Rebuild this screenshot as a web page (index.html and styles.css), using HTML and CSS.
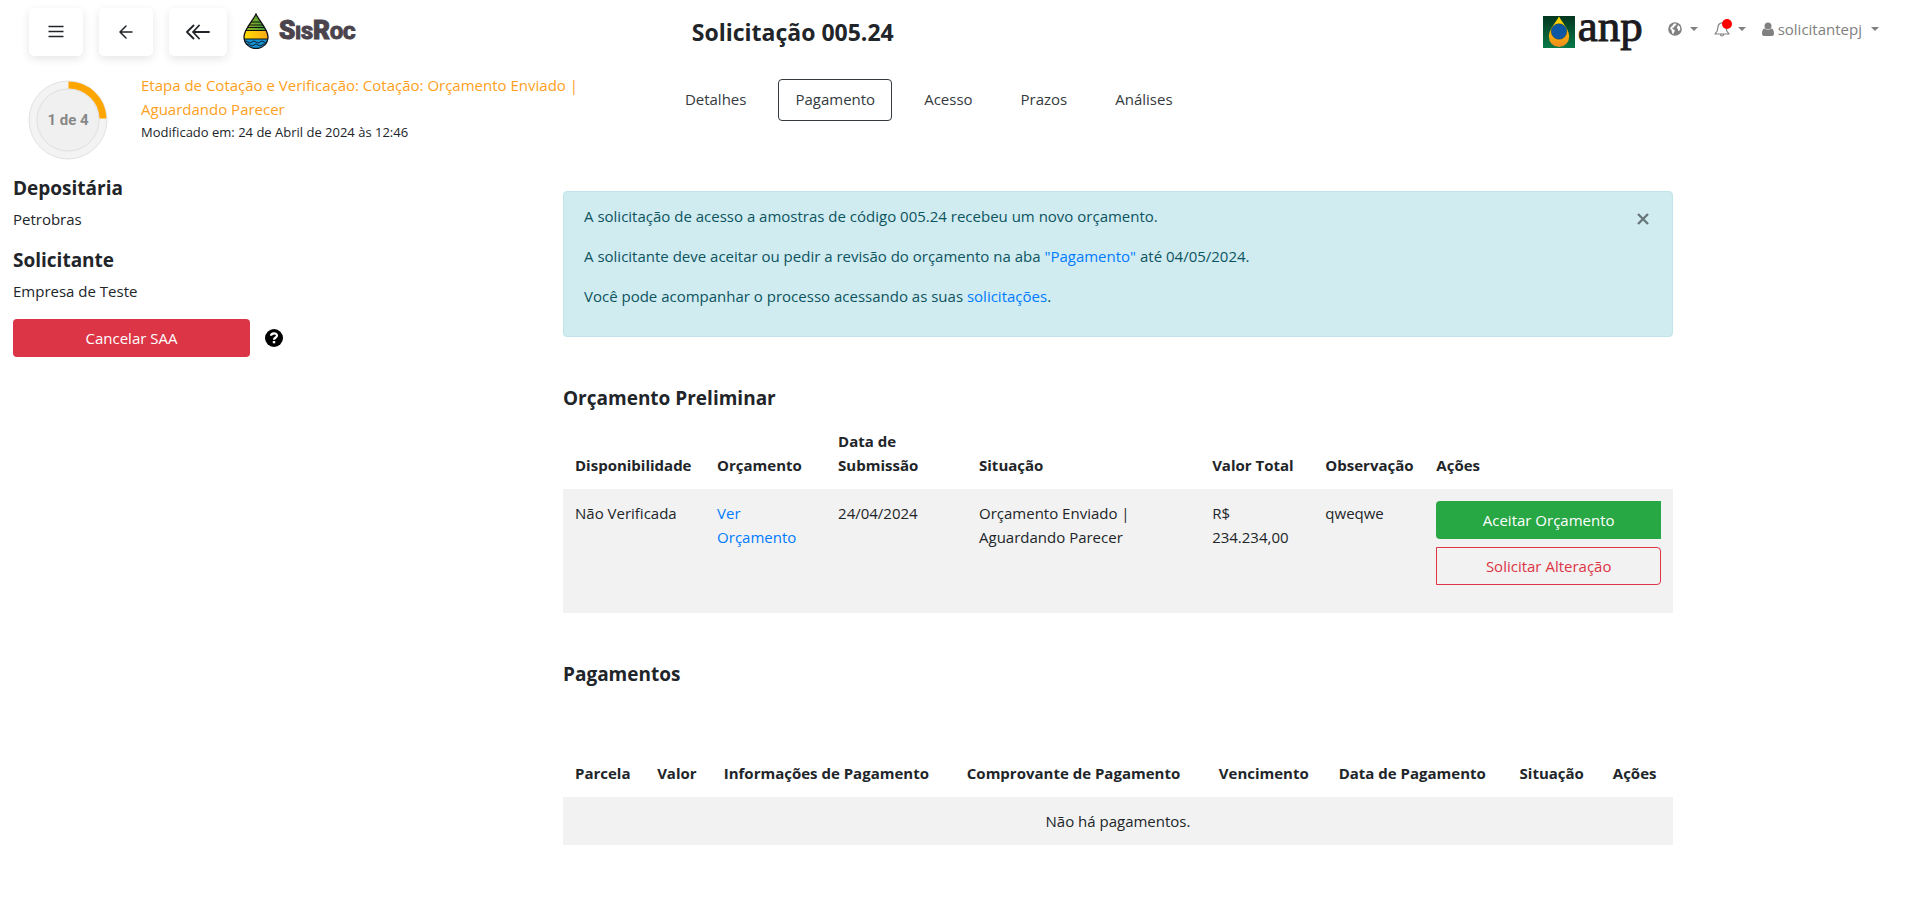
FILE: index.html
```html
<!DOCTYPE html>
<html lang="pt-BR">
<head>
<meta charset="utf-8">
<title>SisRoc - Solicitação 005.24</title>
<link rel="stylesheet" href="styles.css">
</head>
<body>
<header class="topbar">
  <div class="topbar-left">
    <button class="nav-btn" type="button" aria-label="Menu">
      <svg width="16" height="16" viewBox="0 0 16 16" fill="none" stroke="#212529" stroke-width="1.3"><path d="M0.500 2.500h15M0.500 7.500h15M0.500 12.500h15"/></svg>
    </button>
    <button class="nav-btn" type="button" aria-label="Voltar">
      <svg width="14" height="14" viewBox="0 0 14 14" fill="none" stroke="#212529" stroke-width="1.5" stroke-linecap="round" stroke-linejoin="round"><path d="M13 7H1M7 1L1 7l6 6"/></svg>
    </button>
    <button class="nav-btn nav-btn-wide" type="button" aria-label="Voltar ao início">
      <svg width="24" height="16" viewBox="0 0 24 16" fill="none" stroke="#212529" stroke-width="1.8" stroke-linecap="round" stroke-linejoin="round"><path d="M23 8H7M13 1.500L7 8l6 6.500M7.500 1.500L1 8l6.500 6.500"/></svg>
    </button>
    <a class="brand" href="#" aria-label="SisRoc">
      <svg width="26" height="36" viewBox="0 0 26 36">
        <defs><clipPath id="drop"><path d="M13 1C10 8 1 16 1 24a12 11.500 0 0 0 24 0C25 16 16 8 13 1z"/></clipPath>
        <linearGradient id="leaf"><stop offset="0" stop-color="#a5bf1f"/><stop offset="1" stop-color="#2f9440"/></linearGradient>
        <linearGradient id="sand"><stop offset="0" stop-color="#ffe000"/><stop offset="1" stop-color="#f9a51a"/></linearGradient></defs>
        <g clip-path="url(#drop)">
          <path fill="url(#leaf)" d="M0 0h26v17H0z"/>
          <path fill="url(#sand)" d="M0 17h26v9H0z"/>
          <path fill="#1593d2" d="M0 26h26v10H0z"/>
          <path d="M0 9h26M0 12h26M0 14.500h26M0 17.500h26M0 26h26" stroke="#111" stroke-width="1.200"/>
          <path d="M1 29q2-2 4 0t4 0 4 0 4 0 4 0 4 0M3 32q2-2 4 0t4 0 4 0 4 0 4 0" fill="none" stroke="#123" stroke-width="1"/>
        </g>
        <path d="M13 1C10 8 1 16 1 24a12 11.500 0 0 0 24 0C25 16 16 8 13 1z" fill="none" stroke="#111" stroke-width="1.300"/>
      </svg>
      <span class="brand-name">S<small>IS</small>R<small>OC</small></span>
    </a>
  </div>
  <h1 class="page-title">Solicitação 005.24</h1>
  <div class="topbar-right">
    <a class="anp" href="#" aria-label="ANP">
      <svg width="32" height="32" viewBox="0 0 32 32">
        <defs><linearGradient id="green" x2="0" y2="1"><stop offset="0" stop-color="#03351f"/><stop offset="1" stop-color="#087a48"/></linearGradient>
        <linearGradient id="gold" x2="0" y2="1"><stop offset="0" stop-color="#ffe000"/><stop offset="1" stop-color="#f08a1c"/></linearGradient></defs>
        <path fill="url(#green)" d="M0 0h32v32H0z"/>
        <path fill="url(#gold)" d="M16 0.500C14 5 5.800 13 5.800 20.500a10.200 10.500 0 0 0 20.400 0C26.200 13 18 5 16 0.500z"/>
        <circle cx="16" cy="15.500" r="7.800" fill="#0b57a4" stroke="#073d2a" stroke-width=".4"/>
      </svg>
      <span class="anp-name">anp</span>
    </a>
    <button class="menu-btn" type="button" aria-label="Idioma">
      <svg width="14" height="14" viewBox="0 0 14 14"><circle cx="7" cy="7" r="6.800" fill="#808080"/><path fill="#fff" d="M6 1.500l2.500.3L8 3.200 6.500 4 6 5.500 4 6l1.500 1.500 1.500 1-.8 1.500L5 12.500 4 10.500 3.500 8 2 6.500 3 5 4.500 3.500zM10.500 3l1.500 2 .3 2.500-1.300 1.500-1-.5V7L8.800 6.200l.5-1.700z"/></svg>
      <span class="caret"></span>
    </button>
    <button class="menu-btn" type="button" aria-label="Notificações">
      <svg width="16" height="16" viewBox="0 0 16 16" fill="none" stroke="#808080" stroke-width="1.200" stroke-linejoin="round"><path d="M8 1v1M8 2C5.500 2 4 4 4 6c0 3.500-1 5-3 7h14c-2-2-3-3.500-3-7 0-2-1.500-4-4-4zM6.500 13.500a1.500 1.500 0 0 0 3 0"/></svg>
      <span class="alert-dot"></span>
      <span class="caret"></span>
    </button>
    <button class="menu-btn menu-user" type="button">
      <svg width="12" height="14" viewBox="0 0 12 14" fill="#808080"><circle cx="6" cy="4" r="3.500"/><path d="M2.500 6.500C1 7 0 8.500 0 11.500 0 13 .8 14 2 14h8c1.200 0 2-1 2-2.500 0-3-1-4.500-2.500-5a5 5 0 0 1-7 0z"/></svg>
      <span>solicitantepj</span>
      <span class="caret"></span>
    </button>
  </div>
</header>

<section class="statusbar">
  <div class="status">
    <svg class="progress" width="80" height="80" viewBox="0 0 80 80" role="img">
      <circle cx="40" cy="40" r="39" fill="#f3f3f3" stroke="#e2e2e2"/>
      <circle cx="40" cy="40" r="31" fill="#f0f0f0" stroke="#e0e0e0"/>
      <path d="M40.500 5A34.500 34.500 0 0 1 75 38.500" fill="none" stroke="#ffa500" stroke-width="7"/>
      <text class="progress-text" x="40" y="45" text-anchor="middle">1 de 4</text>
    </svg>
    <div>
      <p class="status-stage">Etapa de Cotação e Verificação: Cotação: Orçamento Enviado | Aguardando Parecer</p>
      <p class="status-date">Modificado em: 24 de Abril de 2024 às 12:46</p>
    </div>
  </div>
  <nav class="tabs">
    <a class="tab" href="#">Detalhes</a>
    <a class="tab tab-active" href="#">Pagamento</a>
    <a class="tab" href="#">Acesso</a>
    <a class="tab" href="#">Prazos</a>
    <a class="tab" href="#">Análises</a>
  </nav>
</section>

<div class="layout">
  <aside class="sidebar">
    <h2 class="heading">Depositária</h2>
    <p class="party">Petrobras</p>
    <h2 class="heading">Solicitante</h2>
    <p class="party">Empresa de Teste</p>
    <div class="cancel">
      <button class="btn btn-danger" type="button">Cancelar SAA</button>
      <svg width="18" height="18" viewBox="0 0 18 18" role="img" aria-label="Ajuda"><circle cx="9" cy="9" r="9"/><path d="M6 6.800C6.200 3.500 12 3.500 12 6.600 12 8.800 9 8.600 9 10.700" fill="none" stroke="#fff" stroke-width="2.200"/><path fill="#fff" d="M7.800 12h2.400v2.300H7.800z"/></svg>
    </div>
  </aside>
  <main>
    <div class="notice" role="alert">
      <div>
        <p>A solicitação de acesso a amostras de código 005.24 recebeu um novo orçamento.</p>
        <p>A solicitante deve aceitar ou pedir a revisão do orçamento na aba <a href="#">"Pagamento"</a> até 04/05/2024.</p>
        <p>Você pode acompanhar o processo acessando as suas <a href="#">solicitações</a>.</p>
      </div>
      <button class="close" type="button" aria-label="Fechar">
        <svg width="12" height="12" viewBox="0 0 12 12" stroke="#69777a" stroke-width="2.400"><path d="M1 1l10 10M11 1L1 11"/></svg>
      </button>
    </div>

    <h2 class="heading">Orçamento Preliminar</h2>
    <table class="grid">
      <colgroup><col class="q1"><col class="q2"><col class="q3"><col class="q4"><col class="q5"><col class="q6"><col></colgroup>
      <thead><tr><th>Disponibilidade</th><th>Orçamento</th><th>Data de<br>Submissão</th><th>Situação</th><th>Valor Total</th><th>Observação</th><th>Ações</th></tr></thead>
      <tbody><tr>
        <td>Não Verificada</td>
        <td><a href="#">Ver Orçamento</a></td>
        <td>24/04/2024</td>
        <td>Orçamento Enviado | Aguardando Parecer</td>
        <td>R$ 234.234,00</td>
        <td>qweqwe</td>
        <td><div class="actions">
          <button class="btn btn-success" type="button">Aceitar Orçamento</button>
          <button class="btn btn-outline" type="button">Solicitar Alteração</button>
        </div></td>
      </tr></tbody>
    </table>

    <h2 class="heading heading-payments">Pagamentos</h2>
    <table class="grid">
      <colgroup><col class="p1"><col class="p2"><col class="p3"><col class="p4"><col class="p5"><col class="p6"><col class="p7"><col></colgroup>
      <thead><tr><th>Parcela</th><th>Valor</th><th>Informações de Pagamento</th><th>Comprovante de Pagamento</th><th>Vencimento</th><th>Data de Pagamento</th><th>Situação</th><th>Ações</th></tr></thead>
      <tbody><tr><td class="empty" colspan="8">Não há pagamentos.</td></tr></tbody>
    </table>
  </main>
</div>
</body>
</html>
```

FILE: styles.css
```css
* { box-sizing: border-box; }

body {
  margin: 0;
  background: #fff;
  color: #212529;
  font: 15px/24px "Segoe UI", "Open Sans", sans-serif;
}

h1, h2, p { margin: 0; }
a { color: #007bff; text-decoration: none; }
button { font: inherit; cursor: pointer; }

.topbar {
  display: grid;
  grid-template-columns: 664fr auto 987fr;
  align-items: start;
  height: 64px;
  padding: 8px 31px 0 29px;
}
.topbar-left { display: flex; gap: 16px; }
.nav-btn {
  display: flex;
  align-items: center;
  justify-content: center;
  width: 54px;
  height: 48px;
  padding: 0;
  border: 0;
  border-radius: 5px;
  background: #fff;
  box-shadow: 0 3px 10px rgba(0, 0, 0, .1);
}
.nav-btn-wide { width: 58px; }
.brand { display: flex; align-items: center; gap: 10px; height: 48px; margin-top: -1px; }
.brand-name {
  color: #4b444d;
  font: 900 26px/36px "Impact", "Roboto", sans-serif;
  -webkit-text-stroke: 1px #4b444d;
}
.brand-name small { font-size: 19px; }

.page-title { padding-top: 8px; font-size: 23px; line-height: 32px; }

.topbar-right { display: flex; justify-content: flex-end; align-items: center; height: 42px; }
.anp { display: flex; align-items: center; gap: 3px; height: 48px; margin-right: 25px; }
.anp svg { margin-top: 6px; }
.anp-name {
  margin-bottom: 6px;
  color: #1c1b20;
  font: 45px/42px "Liberation Serif", serif;
  -webkit-text-stroke: 1px #1c1b20;
}
.menu-btn {
  position: relative;
  display: flex;
  align-items: center;
  gap: 8px;
  margin-right: 16px;
  padding: 0;
  border: 0;
  background: none;
  color: #808080;
}
.menu-user { gap: 4px; margin-right: 0; }
.menu-user .caret { margin-left: 5px; }
.alert-dot {
  position: absolute;
  top: -2px;
  left: 8px;
  width: 10px;
  height: 10px;
  border-radius: 50%;
  background: #f00;
}
.caret { border: 4px solid transparent; border-top-color: #808080; border-bottom: 0; }

.statusbar { display: flex; align-items: flex-start; padding: 9px 0 0 28px; }
.status { display: flex; gap: 33px; width: 34%; padding-top: 7px; }
.status > div { width: 450px; margin-top: -7px; }
.progress { flex: none; }
.progress-text { fill: #888; font: bold 15px "Roboto", sans-serif; }
.status-stage { color: #ffa01c; }
.status-date { font-size: 13px; line-height: 22px; }

.tabs { display: flex; align-items: center; gap: 16px; padding: 6px 0 0 1px; }
.tab { padding: 7px 16px 9px; color: #343a40; }
.tab-active { border: 1px solid #343a40; border-radius: 4px; }

.layout { display: grid; grid-template-columns: 563fr 1110fr 237fr; padding-top: 16px; }
.sidebar { padding-left: 13px; }
.heading { font-size: 19px; line-height: 24px; }
.party { padding: 7px 0 17px; }
.cancel { display: flex; align-items: center; gap: 15px; margin-top: -1px; }
.cancel .btn { width: 237px; }

.btn {
  height: 38px;
  padding: 0 12px;
  border: 1px solid transparent;
  border-radius: 4px;
  color: #fff;
}
.btn-danger { background: #dc3545; }
.btn-success { background: #28a745; border-radius: 4px 0 0 4px; }
.btn-outline { border-color: #dc3545; border-radius: 0 4px 4px 0; background: transparent; color: #dc3545; }

.notice {
  display: flex;
  justify-content: space-between;
  align-items: flex-start;
  margin: 15px 0 49px;
  padding: 12px 20px;
  border: 1px solid #bee5eb;
  border-radius: 4px;
  background: #d1ecf1;
  color: #0c5460;
}
.notice p { margin-bottom: 16px; }
.close { display: flex; margin: 3px 0; padding: 6px 3px; border: 0; background: none; }

.grid { width: 100%; margin-top: 7px; border-collapse: collapse; table-layout: fixed; }
.grid th, .grid td { padding: 12px; text-align: left; vertical-align: top; }
.grid th { vertical-align: bottom; white-space: nowrap; }
.grid tbody { background: #f2f2f2; }
.grid .empty { text-align: center; }
.actions { display: grid; gap: 8px; padding-bottom: 16px; }
.heading-payments { margin: 49px 0 63px; }

.q1 { width: 12.8%; }
.q2 { width: 10.9%; }
.q3 { width: 12.7%; }
.q4 { width: 21%; }
.q5 { width: 10.2%; }
.q6 { width: 10%; }
.p1 { width: 7.4%; }
.p2 { width: 6%; }
.p3 { width: 21.9%; }
.p4 { width: 22.7%; }
.p5 { width: 10.8%; }
.p6 { width: 16.3%; }
.p7 { width: 8.4%; }
```
